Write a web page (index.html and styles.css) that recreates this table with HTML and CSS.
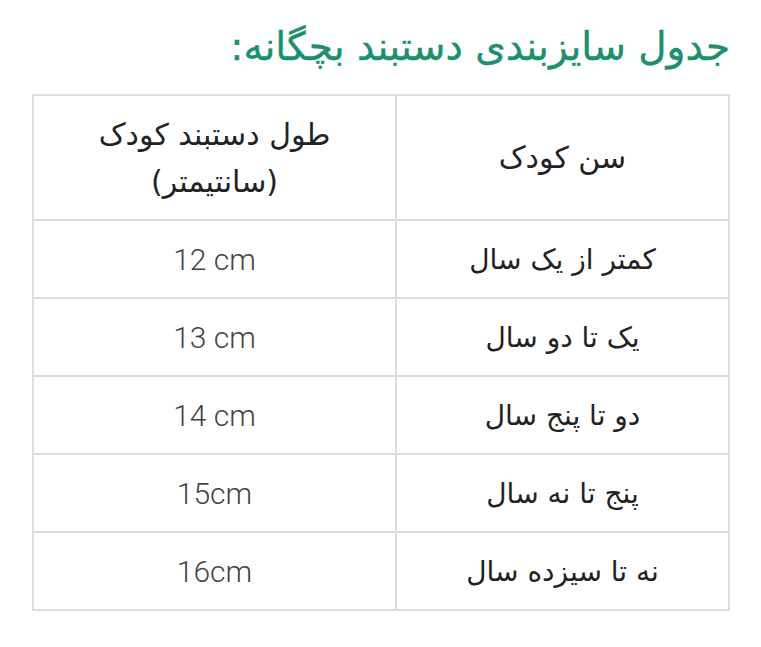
FILE: index.html
```html
<!DOCTYPE html>
<html lang="fa" dir="rtl">
<head>
<meta charset="utf-8">
<link rel="stylesheet" href="styles.css">
</head>
<body>
<div class="page">
  <h2 class="title">جدول سایزبندی دستبند بچگانه:</h2>
  <table class="size-table">
    <thead>
      <tr>
        <th class="col-age">سن کودک</th>
        <th class="col-len">طول دستبند کودک<br>(سانتیمتر)</th>
      </tr>
    </thead>
    <tbody>
      <tr><td class="age">کمتر از یک سال</td><td class="len">12 cm</td></tr>
      <tr><td class="age">یک تا دو سال</td><td class="len">13 cm</td></tr>
      <tr><td class="age">دو تا پنج سال</td><td class="len">14 cm</td></tr>
      <tr><td class="age">پنج تا نه سال</td><td class="len">15cm</td></tr>
      <tr><td class="age">نه تا سیزده سال</td><td class="len">16cm</td></tr>
    </tbody>
  </table>
</div>
</body>
</html>
```
FILE: styles.css
```css
html, body {
  margin: 0;
  padding: 0;
  background: #fff;
}
.page {
  padding: 22px 31px 0 32px;
  font-family: "DejaVu Sans", "Noto Sans", sans-serif;
}
.title {
  margin: 0 0 22px 0;
  color: #1b8f6f;
  font-size: 39px;
  font-weight: normal;
  line-height: 50px;
  text-align: right;
  -webkit-text-stroke: 0.4px #1b8f6f;
}
.size-table {
  width: 698px;
  border-collapse: collapse;
  border: 2px solid #dddddd;
  color: #222;
}
.size-table th,
.size-table td {
  border: 2px solid #dddddd;
  text-align: center;
  vertical-align: middle;
  padding: 0;
}
.size-table th {
  height: 123px;
  font-weight: normal;
  font-size: 30px;
  line-height: 47px;
}
.col-age {
  width: 331px;
}
.size-table td {
  height: 76px;
}
.age {
  font-size: 28px;
}
.len {
  font-family: Roboto, "Liberation Sans", sans-serif;
  font-weight: 300;
  font-size: 30px;
  color: #444;
  direction: ltr;
}
```
